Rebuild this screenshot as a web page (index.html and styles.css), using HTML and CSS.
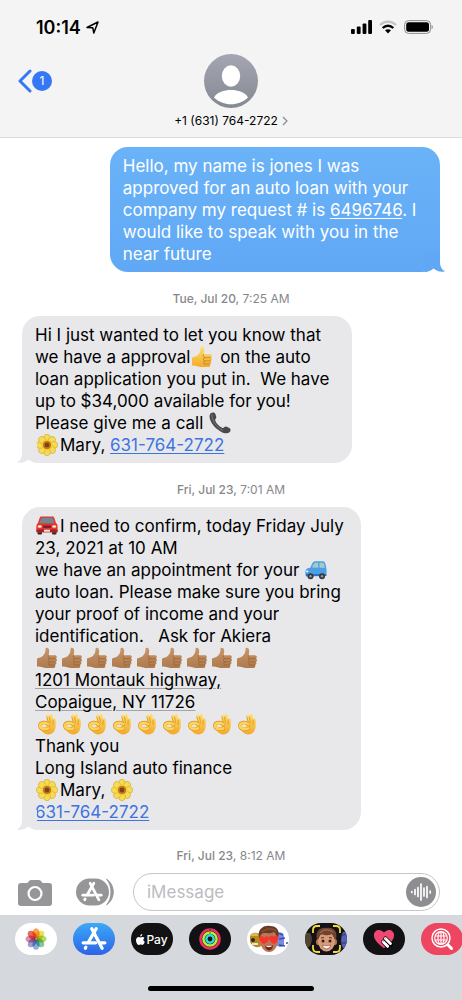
FILE: index.html
```
<!DOCTYPE html>
<html lang="en">
<head>
<meta charset="utf-8">
<meta name="viewport" content="width=device-width, initial-scale=1">
<title>Messages</title>
<link rel="stylesheet" href="styles.css">
</head>
<body>
<svg class="sprite" aria-hidden="true">
  <defs>
    <linearGradient id="gold" x1="0" y1="0" x2="0" y2="1"><stop offset="0" stop-color="#ffe06a"/><stop offset="1" stop-color="#f2a92c"/></linearGradient>
    <linearGradient id="tan" x1="0" y1="0" x2="0" y2="1"><stop offset="0" stop-color="#c99768"/><stop offset="1" stop-color="#ad794e"/></linearGradient>
    <linearGradient id="person" x1="0" y1="0" x2="0" y2="1"><stop offset="0" stop-color="#a4a7b3"/><stop offset="1" stop-color="#858993"/></linearGradient>
    <symbol id="thumb" viewBox="0 0 22 22">
      <path d="M1 11.500 C3 11 5 10.500 6.500 9.300 C8.500 7.600 9.600 5 9.500 2 C9.500 .4 11.800 .1 12.700 1.800 C13.700 3.800 13 6.200 12.600 8.300 H18.800 C21.200 8.300 21.400 11 19.800 11.500 C21.600 12.200 21.400 14.400 19.600 14.800 C21 15.600 20.600 17.600 18.900 17.900 C20 18.800 19.300 20.900 17.500 21 H11 C7 21 6 19.500 1 19.500 Z"/>
      <path d="M13.500 11.600 H19.500 M13.500 14.900 H19.400 M13.500 18 H18.700 M12.500 8.400 C11.800 10 12.500 11 13.600 11.600 M12.800 11.900 C12 13 12.300 14.200 13.500 14.900 C12.400 15.900 12.500 17.300 13.500 18" fill="none" stroke="#8a4b14" stroke-opacity=".45" stroke-width=".9" stroke-linecap="round"/>
    </symbol>
    <symbol id="ok" viewBox="0 0 22 22">
      <path d="M10.500 3 C10.300 1.200 12.300 .8 13 2.300 L13.600 4 C13.300 .6 16 .2 16.500 2.600 L17.200 7 C17.300 4.500 19.700 4.800 19.700 7.300 C19.900 11 20 15 18.300 18 C16.500 21.300 12 22.300 8.800 20.500 C6.500 19.300 5.500 17.500 4.500 15.800 L11.800 9.500 Z" fill="url(#gold)"/>
      <path d="M13.600 4 L14.400 9.500 M17.200 7 L17 11.500 M10.800 4 L12.300 9.600" fill="none" stroke="#d98f1e" stroke-width=".8" stroke-linecap="round"/>
      <path d="M12.300 15.500 C9 17.300 4.500 16.300 4 13 C3.600 9.800 8.500 8.200 12.500 11.300" fill="none" stroke="#d98f1e" stroke-width="3.600" stroke-linecap="round"/>
      <path d="M12.300 15.300 C9 17.100 4.700 16 4.200 13 C3.800 10 8.500 8.500 12.500 11.300" fill="none" stroke="#ffd558" stroke-width="2.600" stroke-linecap="round"/>
      <ellipse cx="8.300" cy="12.900" rx="2.300" ry="1.500" fill="#e9e4d6"/>
    </symbol>
    <symbol id="flower" viewBox="0 0 22 22">
      <g fill="#f7dc52" stroke="#c79a22" stroke-width=".5">
        <ellipse cx="11" cy="4.300" rx="3.400" ry="4"/>
        <ellipse cx="11" cy="4.300" rx="3.400" ry="4" transform="rotate(45 11 11)"/>
        <ellipse cx="11" cy="4.300" rx="3.400" ry="4" transform="rotate(90 11 11)"/>
        <ellipse cx="11" cy="4.300" rx="3.400" ry="4" transform="rotate(135 11 11)"/>
        <ellipse cx="11" cy="4.300" rx="3.400" ry="4" transform="rotate(180 11 11)"/>
        <ellipse cx="11" cy="4.300" rx="3.400" ry="4" transform="rotate(225 11 11)"/>
        <ellipse cx="11" cy="4.300" rx="3.400" ry="4" transform="rotate(270 11 11)"/>
        <ellipse cx="11" cy="4.300" rx="3.400" ry="4" transform="rotate(315 11 11)"/>
      </g>
      <circle cx="11" cy="11" r="5.500" fill="#f3cb3a"/>
      <circle cx="11" cy="11" r="4" fill="#b8761d"/>
      <circle cx="11" cy="11" r="2.300" fill="#7c4314"/>
    </symbol>
    <symbol id="phone" viewBox="0 0 22 22">
      <path d="M1.500 1.500 C3 0 5.500 0 6.300 1.800 L7.300 5 C7.500 6.500 5.800 7 6.200 8.500 C7.500 12 10.500 14.800 13.600 16 C15 16.300 15.500 14.300 17.200 14.600 L20.400 16 C22 17 22 19 20.500 20.300 C18.500 22 15 21.300 12 19.700 C7 17 2.800 12.500 1.100 7.500 C.3 5 .3 2.800 1.500 1.500 Z" fill="#48494d"/>
      <path d="M3 2.500 C2.500 8 7 15 14 18.500" fill="none" stroke="#7b7c80" stroke-width="1"/>
    </symbol>
    <symbol id="car-front" viewBox="0 0 22 22">
      <rect x="1.500" y="15" width="4.500" height="4.500" rx="1" fill="#2a2a2e"/><rect x="16" y="15" width="4.500" height="4.500" rx="1" fill="#2a2a2e"/>
      <path d="M5 1.500 H17 C18 1.500 18.500 3 20 8 C21.600 9 21.800 10.500 21.600 16.500 C21.600 17.500 21 17.500 20 17.500 H2 C1 17.500 .4 17.500 .4 16.500 C.2 10.500 .4 9 2 8 C3.500 3 4 1.500 5 1.500 Z" fill="#e5352e"/>
      <path d="M5.300 2.800 H16.700 L18.500 8.300 H3.500 Z" fill="#6f8791"/>
      <path d="M.6 14.500 H21.400 V17 H.6 Z" fill="#9c2424"/>
      <path d="M6.500 10.600 H15.500 L14.500 13 H7.500 Z" fill="#7f2023"/>
      <ellipse cx="3.800" cy="11.500" rx="2" ry="1.300" fill="#ffe9d9"/><ellipse cx="18.200" cy="11.500" rx="2" ry="1.300" fill="#ffe9d9"/>
      <rect x="8" y="14.700" width="6" height="2" fill="#eee"/>
    </symbol>
    <symbol id="car-side" viewBox="0 0 22 22">
      <path d="M.5 12 C.8 9.800 3 9 5.500 8.500 C6.800 4.800 8 2.500 10 2.200 H18 C20 2.300 20.800 5 21.300 9 C21.800 11 21.600 14 21.300 17 L1 17.500 C.2 16 .2 14 .5 12 Z" fill="#4a9fe8"/>
      <path d="M7.200 8.500 C8 5.500 9 4 10.500 3.700 H13.200 V8.800 Z M14.500 3.700 H18 C19.200 4.500 19.700 6.500 19.900 8.800 H14.500 Z" fill="#a5cbc3"/>
      <path d="M1 16 H21.300" stroke="#2667a8" stroke-width="1.500"/>
      <circle cx="5.500" cy="17.300" r="3" fill="#36383d"/><circle cx="17" cy="17.300" r="3" fill="#36383d"/>
      <circle cx="5.500" cy="17.300" r="1.200" fill="#999"/><circle cx="17" cy="17.300" r="1.200" fill="#999"/>
      <ellipse cx="2.200" cy="12.300" rx="1.200" ry=".9" fill="#fff"/>
    </symbol>
    <symbol id="tail-shape" viewBox="0 0 20 20"><path d="M5 0 V10 C5 14.500 3.500 17.500 0 19.200 C4 20.600 8.500 19.200 11.500 16.500 C14 18.800 17 19.700 20 20 V0 Z"/></symbol>
    <symbol id="store" viewBox="0 0 24 24">
      <g fill="none" stroke="#fff" stroke-width="3" stroke-linecap="round">
        <path d="M10 2.500 L19.500 20.500"/><path d="M14 2.500 L6.800 15"/><path d="M2 15.500 H13.500"/><path d="M18 15.500 H22"/><path d="M4.500 19.500 L4 20.500"/>
      </g>
    </symbol>
  </defs>
</svg>

<div class="screen">
  <header class="top">
    <div class="status">
      <div class="clock"><span>10:14</span>
        <svg width="13" height="13" viewBox="0 0 13 13" aria-label="Location"><path d="M1 6.500 L12 1 L7.800 12 L6.800 6.800 Z" fill="none" stroke="#000" stroke-width="1.500" stroke-linejoin="round"/></svg>
      </div>
      <div class="signals">
        <svg width="21" height="14" viewBox="0 0 21 14" aria-label="Signal"><rect x="0" y="9" width="3.800" height="5" rx="1"/><rect x="5.800" y="6.500" width="3.800" height="7.500" rx="1"/><rect x="11.600" y="3.500" width="3.800" height="10.500" rx="1"/><rect x="17.200" y="0" width="3.800" height="14" rx="1"/></svg>
        <svg width="18" height="14" viewBox="0 0 18 14" aria-label="Wi-Fi"><g fill="none" stroke-width="2.300"><path d="M1 5 C5.500 .4 12.500 .4 17 5" stroke="#c4c4c4"/><path d="M3.700 8 C6.800 5 11.200 5 14.300 8" stroke="#000"/></g><path d="M6 10.300 C7.800 8.800 10.200 8.800 12 10.300 L9 13.500 Z"/></svg>
        <svg width="29" height="14" viewBox="0 0 29 14" aria-label="Battery"><rect x=".6" y=".6" width="26" height="12.800" rx="4" fill="none" stroke="#8d8d8d"/><rect x="2.200" y="2.200" width="22.800" height="9.600" rx="2.500"/><path d="M27.600 5 C29.200 5.500 29.200 8.500 27.600 9 Z" fill="#8d8d8d"/></svg>
      </div>
    </div>
    <button class="back" aria-label="Back, 1 unread">
      <svg width="14" height="24" viewBox="0 0 14 24"><path d="M12 2 L2 12 L12 22" fill="none" stroke="#3478f6" stroke-width="3" stroke-linecap="round" stroke-linejoin="round"/></svg>
      <span class="badge">1</span>
    </button>
    <button class="contact">
      <svg width="54" height="54" viewBox="0 0 54 54" aria-hidden="true"><circle cx="27" cy="27" r="27" fill="url(#person)"/><ellipse cx="27" cy="22" rx="9.200" ry="10.700" fill="#fff"/><path d="M10 43.500 C13 38 20 36 27 36 C34 36 41 38 44 43.500 C35 52.500 19 52.500 10 43.500 Z" fill="#fff"/></svg>
      <span class="number">+1 (631) 764-2722
        <svg width="6" height="10" viewBox="0 0 6 10"><path d="M1 1 L5 5 L1 9" fill="none" stroke="#8a8a8e" stroke-width="1.200"/></svg>
      </span>
    </button>
  </header>

  <main class="thread">
    <div class="bubble sent">Hello, my name is jones I was<br>approved for an auto loan with your<br>company my request # is <a href="#">6496746</a>. I<br>would like to speak with you in the<br>near future<svg class="tail"><use href="#tail-shape"/></svg></div>
    <time class="stamp"><b>Tue, Jul 20,</b> 7:25 AM</time>
    <div class="bubble received">Hi I just wanted to let you know that<br>we have a approval<svg class="emoji gold"><use href="#thumb"/></svg> on the auto<br>loan application you put in.&nbsp; We have<br>up to $34,000 available for you!<br>Please give me a call <svg class="emoji"><use href="#phone"/></svg><br><svg class="emoji"><use href="#flower"/></svg>Mary, <a href="#">631-764-2722</a><svg class="tail"><use href="#tail-shape"/></svg></div>
    <time class="stamp"><b>Fri, Jul 23,</b> 7:01 AM</time>
    <div class="bubble received wide"><svg class="emoji"><use href="#car-front"/></svg>I need to confirm, today Friday July<br>23, 2021 at 10 AM<br>we have an appointment for your <svg class="emoji"><use href="#car-side"/></svg><br>auto loan. Please make sure you bring<br>your proof of income and your<br>identification.&nbsp;&nbsp; Ask for Akiera<br><svg class="emoji tan"><use href="#thumb"/></svg><svg class="emoji tan"><use href="#thumb"/></svg><svg class="emoji tan"><use href="#thumb"/></svg><svg class="emoji tan"><use href="#thumb"/></svg><svg class="emoji tan"><use href="#thumb"/></svg><svg class="emoji tan"><use href="#thumb"/></svg><svg class="emoji tan"><use href="#thumb"/></svg><svg class="emoji tan"><use href="#thumb"/></svg><svg class="emoji tan"><use href="#thumb"/></svg><br><a class="address" href="#">1201 Montauk highway,<br>Copaigue, NY 11726</a><br><svg class="emoji"><use href="#ok"/></svg><svg class="emoji"><use href="#ok"/></svg><svg class="emoji"><use href="#ok"/></svg><svg class="emoji"><use href="#ok"/></svg><svg class="emoji"><use href="#ok"/></svg><svg class="emoji"><use href="#ok"/></svg><svg class="emoji"><use href="#ok"/></svg><svg class="emoji"><use href="#ok"/></svg><svg class="emoji"><use href="#ok"/></svg><br>Thank you<br>Long Island auto finance<br><svg class="emoji"><use href="#flower"/></svg>Mary, <svg class="emoji"><use href="#flower"/></svg><br><a href="#">631-764-2722</a><svg class="tail"><use href="#tail-shape"/></svg></div>
    <time class="stamp"><b>Fri, Jul 23,</b> 8:12 AM</time>
  </main>

  <form class="composer">
    <button type="button" aria-label="Camera"><svg width="34" height="27" viewBox="0 0 34 27"><path d="M3 4 H9 C10.500 4 10.500 1 13 1 H21 C23.500 1 23.500 4 25 4 H31 C33 4 34 5 34 7 V24 C34 26 33 27 31 27 H3 C1 27 0 26 0 24 V7 C0 5 1 4 3 4 Z" fill="#969699"/><circle cx="17" cy="14.500" r="6.500" fill="none" stroke="#fff" stroke-width="2.200"/></svg></button>
    <button type="button" aria-label="Apps"><svg width="38" height="28" viewBox="0 0 38 28"><rect width="33" height="27" y=".5" rx="13.500" fill="#969699"/><path d="M30.500 1.300 C39.500 6.500 39.500 21.500 30.500 26.700 C36.500 21 36.500 7 30.500 1.300 Z" fill="#969699" stroke="#969699"/><use href="#store" x="5" y="3" width="22" height="22"/></svg></button>
    <div class="field">
      <input type="text" placeholder="iMessage" aria-label="iMessage">
      <button type="button" aria-label="Record audio"><svg width="30" height="30" viewBox="0 0 30 30"><circle cx="15" cy="15" r="15" fill="#8e8e92"/><path d="M5.800 14.500 V15.500 M9 12.500 V17.500 M12 10.500 V19.500 M15 7 V23 M18 11 V19 M21 9.500 V20.500 M24.200 14 V16" stroke="#fff" stroke-width="1.700" stroke-linecap="round"/></svg></button>
    </div>
  </form>

  <footer class="drawer">
    <nav class="apps" aria-label="iMessage apps">
      <button class="app white" aria-label="Photos"><svg class="petals" width="22" height="22" viewBox="0 0 24 24"><ellipse cx="12" cy="6" rx="3.900" ry="5.600" fill="#f9a24a"/><ellipse cx="12" cy="6" rx="3.900" ry="5.600" fill="#efe04e" transform="rotate(45 12 12)"/><ellipse cx="12" cy="6" rx="3.900" ry="5.600" fill="#b4d966" transform="rotate(90 12 12)"/><ellipse cx="12" cy="6" rx="3.900" ry="5.600" fill="#86c9a0" transform="rotate(135 12 12)"/><ellipse cx="12" cy="6" rx="3.900" ry="5.600" fill="#86b0dd" transform="rotate(180 12 12)"/><ellipse cx="12" cy="6" rx="3.900" ry="5.600" fill="#a69ad0" transform="rotate(225 12 12)"/><ellipse cx="12" cy="6" rx="3.900" ry="5.600" fill="#d88fb4" transform="rotate(270 12 12)"/><ellipse cx="12" cy="6" rx="3.900" ry="5.600" fill="#f0685c" transform="rotate(315 12 12)"/></svg></button>
      <button class="app blue" aria-label="App Store"><svg width="26" height="26"><use href="#store"/></svg></button>
      <button class="app black"><svg width="9" height="11" viewBox="0 0 18 22" aria-label="Apple"><path d="M12.500 0 C12.700 2.700 10.700 5 8.500 5 C8.300 2.500 10.200 .4 12.500 0 Z M16.800 8 C13.600 10 14 14 17.600 15.700 C16.500 19 14.500 22 12.500 21.800 C11 21.700 10.800 20.900 9 20.900 C7.200 20.900 6.800 21.800 5.500 21.800 C2.500 21.800 0 16.500 0 12.500 C0 8.500 2.500 6 5.300 6 C7 6 8 7 9.200 7 C10.200 7 11.500 5.800 13.500 6 C15 6.100 16.100 6.900 16.800 8 Z" fill="#fff"/></svg><span>Pay</span></button>
      <button class="app black" aria-label="Activity"><svg width="22" height="22" viewBox="0 0 24 24"><g fill="none" stroke-width="2.700"><circle cx="12" cy="12" r="10.400" stroke="#ee2e66"/><circle cx="12" cy="12" r="7.200" stroke="#b9ed38"/><circle cx="12" cy="12" r="4" stroke="#32d7d9"/></g><path d="M12 1 V3 M12 4.500 V6" stroke="#222" stroke-width=".8"/></svg></button>
      <button class="app white" aria-label="Memoji stickers"><svg width="42" height="32" viewBox="0 0 42 32">
        <path d="M3 14 C3 9 12 8 14 13 V23 C10 26 4 23 3 18 Z" fill="#b58a24"/><path d="M3 13 C5 9 11 9 13 13 Z" fill="#dcb846"/><circle cx="6" cy="17" r="2" fill="#2e2717"/><path d="M5 21 H11" stroke="#fff" stroke-width="1.500"/>
        <path d="M30 11 C34 8 37 10 37 14 V22 C35 25 31 24 29 22 Z" fill="#7b88dd"/><path d="M31 10 L36 12 M32 16 L38 15 M32 22 L38 23" stroke="#3b48bd" stroke-width="1.500"/><path d="M39 19 H41 V21 H39 Z" fill="#79809f"/>
        <ellipse cx="22" cy="17" rx="9" ry="12" fill="#b97758"/><path d="M12 15 C10 7 16 2 23 3 C31 3 33 9 31 15 C29 13 29 10 27 9 C22 12 16 8 14 12 Z" fill="#693b25"/><path d="M15 9 C20 5 25 5 29 8" stroke="#94603f" fill="none"/>
        <path d="M12 14 C14 12 16 13 17 15 C19 12 22 13 22 16 C21 19 19 20 17 21 C14 20 12 17 12 14 Z M22 14 C24 12 26 13 27 14 C29 11 32 13 31 16 C31 18 29 20 27 21 C24 20 22 17 22 14 Z" fill="#f8322d"/>
        <path d="M18 23 C21 25 24 24 26 22 C26 29 19 29 18 23 Z" fill="#79231e"/><path d="M19 23 C21 25 24 24 25 23 Z" fill="#fff"/></svg></button>
      <button class="app black" aria-label="Memoji"><svg width="42" height="32" viewBox="0 0 42 32">
        <path d="M0 10 H5 C8 14 7 21 4 24 H0 Z" fill="#514531"/><path d="M38 9 H42 V25 H38 C35 20 36 13 38 9 Z" fill="#5660b5"/><path d="M36 13 L41 11 M36 20 H41" stroke="#2e347a"/>
        <ellipse cx="13" cy="19" rx="2" ry="3" fill="#b97354"/><ellipse cx="30" cy="19" rx="2" ry="3" fill="#b97354"/><ellipse cx="21.500" cy="18.500" rx="8.500" ry="10" fill="#d99a78"/>
        <path d="M12 17 C10 8 15 4 22 5 C29 4 33 9 31 17 C29 15 28 13 27 11 C22 14 17 10 15 12 Z" fill="#70442e"/><path d="M15 10 C18 6 24 6 28 9" fill="none" stroke="#9b6849" stroke-width="1.200"/>
        <circle cx="18" cy="18" r="1.500" fill="#292321"/><circle cx="25" cy="18" r="1.500" fill="#292321"/><path d="M16 15 L19 14.500 M24 14.500 L27 15" stroke="#5a3423"/><path d="M17.500 22 C20 23 23 23 25.500 22 C25 27 18 27 17.500 22 Z" fill="#fff" stroke="#8a3c32" stroke-width=".6"/>
        <path d="M8 10 V7 C8 4 10 3 12 3 H15 M28 3 H31 C34 3 35 5 35 7 V10 M35 22 V25 C35 28 33 29 31 29 H28 M15 29 H12 C9 29 8 27 8 25 V22" fill="none" stroke="#f4da3d" stroke-width="1.800"/></svg></button>
      <button class="app black" aria-label="Digital Touch"><svg width="22" height="22" viewBox="0 0 24 24"><path d="M12 22 C6 18 1 13 1 8 C1 2 8 0 12 5 C16 0 23 2 23 8 C23 13 18 18 12 22 Z" fill="#f04873"/><path d="M13.500 11.500 L20 18 M11 15 L16.500 20.500" stroke="#000" stroke-width="4.600" stroke-linecap="round"/><path d="M13.500 11.500 L19 17 M11 15 L16 20" stroke="#fff" stroke-width="3.200" stroke-linecap="round"/><path d="M12.500 12.500 L14.500 10.500 M10 16 L12 14" stroke="#f04873" stroke-width=".7"/></svg></button>
      <button class="app red" aria-label="Image search"><svg width="24" height="24" viewBox="0 0 24 24"><g fill="none" stroke="#fff" stroke-width="1.200"><circle cx="11" cy="11" r="9" stroke-width="1.500"/><circle cx="11" cy="11" r="6.300"/><ellipse cx="11" cy="11" rx="3" ry="6.300"/><path d="M11 4.700 V17.300 M5 9 H17 M5 13 H17"/><path d="M17.800 17.800 L21.500 21.500" stroke-width="3" stroke-linecap="round"/></g></svg></button>
    </nav>
    <div class="home"></div>
  </footer>
</div>
</body>
</html>
```

FILE: styles.css
```
* { box-sizing: border-box; }
body { margin: 0; font-family: Inter, "Liberation Sans", sans-serif; background: #fff; color: #000; }
button { border: 0; padding: 0; background: none; font: inherit; color: inherit; cursor: pointer; }
svg { display: block; flex: none; }
.sprite { position: absolute; width: 0; height: 0; }
.screen { min-height: 100vh; display: flex; flex-direction: column; }

.top { background: #f4f4f4; border-bottom: 1px solid #dcdcdc; padding: 16px 0 8px; display: grid; grid-template-columns: 1fr auto 1fr; row-gap: 16px; }
.status { grid-column: 1 / -1; display: flex; justify-content: space-between; align-items: center; padding: 0 29px 0 36px; height: 22px; }
.clock { display: flex; align-items: center; gap: 5px; font-size: 18px; font-weight: 600; }
.signals { display: flex; align-items: center; gap: 7px; }
.back { display: flex; align-items: center; padding-left: 18px; height: 54px; }
.badge { width: 20px; height: 20px; border-radius: 50%; background: #3478f6; color: #fff; font-size: 12px; line-height: 20px; }
.contact { display: flex; flex-direction: column; align-items: center; gap: 4px; }
.number { display: flex; align-items: center; gap: 4px; font-size: 12px; line-height: 17px; }

.thread { flex: 1; display: flex; flex-direction: column; padding: 9px 22px 0; }
.bubble { position: relative; width: 79%; font-size: 17px; line-height: 22px; padding: 8px 12px 7px 13px; border-radius: 18px; white-space: nowrap; }
.wide { width: 81%; }
.bubble a { color: inherit; text-decoration: underline; text-underline-offset: 2px; text-decoration-thickness: 1px; }
.sent { align-self: flex-end; background: linear-gradient(#6ab3f7, #60a8f5); color: #fff; }
.received { align-self: flex-start; background: #e8e8eb; }
.received a { color: #3e73e0; }
.received .address { color: inherit; text-decoration-color: #a5a5a8; }
.tail { position: absolute; bottom: 0; width: 20px; height: 20px; }
.received .tail { left: -5px; fill: #e8e8eb; }
.sent .tail { right: -5px; fill: #60a8f5; transform: scaleX(-1); }
.stamp { align-self: center; font-size: 12px; line-height: 16px; margin: 19px 0 9px; color: #87878b; }
.stamp:last-child { margin: 18px 0 9px; }
.stamp b { font-weight: 500; }
.emoji { display: inline-block; width: 22px; height: 22px; margin: 0 2px 0 1px; vertical-align: top; }
.gold { fill: url(#gold); }
.tan { fill: url(#tan); }

.composer { display: flex; align-items: center; padding: 0 22px 4px 18px; gap: 24px; }
.field { flex: 1; min-width: 0; height: 38px; margin-left: -5px; display: flex; align-items: center; border: 1px solid #c6c6c9; border-radius: 19px; padding: 0 3px 0 13px; }
.field input { flex: 1; min-width: 0; border: 0; padding: 0; outline: 0; background: none; font: inherit; font-size: 17px; }
.field input::placeholder { color: #bcbcc0; opacity: 1; }

.drawer { background: #d5d8dd; padding: 8px 0 9px; }
.apps { display: flex; gap: 16px; padding-left: 15px; overflow: hidden; }
.app { flex: none; width: 42px; height: 32px; border-radius: 16px; overflow: hidden; display: flex; align-items: center; justify-content: center; gap: 1px; color: #fff; font-size: 12px; font-weight: 500; }
.petals { isolation: isolate; }
.petals ellipse { mix-blend-mode: multiply; }
.white { background: #fff; }
.black { background: #121214; }
.blue { background: linear-gradient(#3ba9f6, #2d63e6); }
.red { background: #ee4560; }
.home { width: 36%; height: 5px; border-radius: 3px; background: #000; margin: 31px auto 0; }
```
